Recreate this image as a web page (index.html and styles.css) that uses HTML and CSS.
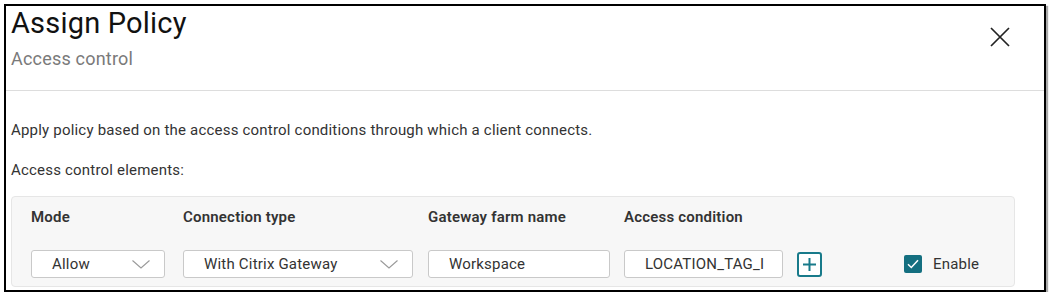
FILE: index.html
```html
<!DOCTYPE html>
<html>
<head>
    <meta charset="UTF-8">
    <meta name="viewport" content="width=device-width, initial-scale=1.0">
    <title>Assign Policy</title>
    <link rel="stylesheet" href="styles.css">
</head>
<body>
    <div class="frame">
        <div class="dialog-header">
            <div class="titles">
                <h1>Assign Policy</h1>
                <div class="subtitle">Access control</div>
            </div>
            <button class="close" aria-label="Close">
                <svg width="20" height="20" viewBox="0 0 20 20">
                    <path d="M1 1 L19 19 M19 1 L1 19" stroke="#222" stroke-width="1.7" fill="none"/>
                </svg>
            </button>
        </div>

        <div class="dialog-body">
            <p>Apply policy based on the access control conditions through which a client connects.</p>
            <p class="section-label">Access control elements:</p>

            <div class="elements">
                <div class="field-label">Mode</div>
                <div class="field-label">Connection type</div>
                <div class="field-label">Gateway farm name</div>
                <div class="field-label">Access condition</div>
                <div></div>
                <div></div>

                <div class="select mode">
                    <span>Allow</span>
                    <svg class="chevron" width="18" height="9" viewBox="0 0 18 9">
                        <path d="M0.5 0.5 L9 8 L17.5 0.5" stroke="#9a9a9a" stroke-width="1.1" fill="none"/>
                    </svg>
                </div>
                <div class="select connection">
                    <span>With Citrix Gateway</span>
                    <svg class="chevron" width="18" height="9" viewBox="0 0 18 9">
                        <path d="M0.5 0.5 L9 8 L17.5 0.5" stroke="#9a9a9a" stroke-width="1.1" fill="none"/>
                    </svg>
                </div>
                <input class="text-input farm" type="text" value="Workspace">
                <input class="text-input condition" type="text" value="LOCATION_TAG_INTERNAL">
                <button class="add" aria-label="Add">
                    <svg width="13" height="13" viewBox="0 0 13 13">
                        <path d="M6.5 0 V13 M0 6.5 H13" stroke="#187a8a" stroke-width="2" fill="none"/>
                    </svg>
                </button>
                <label class="enable">
                    <span class="checkbox">
                        <svg width="12" height="10" viewBox="0 0 12 10">
                            <path d="M1 5.2 L4.3 8.5 L11 1.2" stroke="#fff" stroke-width="1.5" fill="none"/>
                        </svg>
                    </span>
                    Enable
                </label>
            </div>
        </div>
    </div>
</body>
</html>
```

FILE: styles.css
```css
* {
    margin: 0;
    padding: 0;
    box-sizing: border-box;
}

body {
    background: #fff;
    padding: 4px 0 0 4px;
    font-family: Roboto, "Liberation Sans", sans-serif;
    letter-spacing: 0.2px;
    color: #333;
}

.frame {
    width: 1042px;
    height: 288px;
    border: 2px solid #000;
    box-shadow: 2px 2px 1px #aaa;
    overflow: hidden;
    background: #fff;
}

.dialog-header {
    height: 85px;
    border-bottom: 1px solid #ddd;
    display: flex;
    justify-content: space-between;
    align-items: flex-start;
    padding-left: 5px;
}

h1 {
    font-size: 29px;
    font-weight: 400;
    line-height: 34px;
    letter-spacing: 0.2px;
    color: #111;
}

.subtitle {
    margin-top: 8px;
    font-size: 18px;
    line-height: 22px;
    color: #7a7a7a;
}

.close {
    background: none;
    border: none;
    margin: 21px 34px 0 0;
    cursor: pointer;
}

.dialog-body {
    padding: 29px 0 0 5px;
    font-size: 15px;
    line-height: 20px;
}

.section-label {
    margin-top: 20px;
}

.elements {
    margin-top: 16px;
    width: 1004px;
    background: #f7f7f7;
    border: 1px solid #e6e6e6;
    border-radius: 4px;
    padding: 10px 0 8px 19px;
    display: grid;
    grid-template-columns: 152px 245px 196px 173px 107px auto;
    row-gap: 23px;
    align-items: center;
}

.field-label {
    font-weight: 600;
    color: #333;
}

.select,
.text-input {
    height: 28px;
    background: #fff;
    border: 1px solid #c9c9c9;
    border-radius: 3px;
    font-family: inherit;
    font-size: 15px;
    letter-spacing: 0.2px;
    color: #333;
}

.select {
    display: flex;
    align-items: center;
    justify-content: space-between;
    padding: 0 14px 0 20px;
}

.mode { width: 134px; }
.connection { width: 230px; }

.text-input {
    padding: 0 20px;
    outline: none;
}

.farm { width: 182px; }
.condition { width: 159px; padding-right: 18px; }

.add {
    width: 25px;
    height: 25px;
    border: 2px solid #187a8a;
    border-radius: 3px;
    background: #fff;
    display: flex;
    align-items: center;
    justify-content: center;
}

.enable {
    display: flex;
    align-items: center;
    gap: 11px;
    color: #333;
}

.checkbox {
    width: 18px;
    height: 18px;
    border-radius: 2px;
    background: #146f80;
    display: flex;
    align-items: center;
    justify-content: center;
}
```
